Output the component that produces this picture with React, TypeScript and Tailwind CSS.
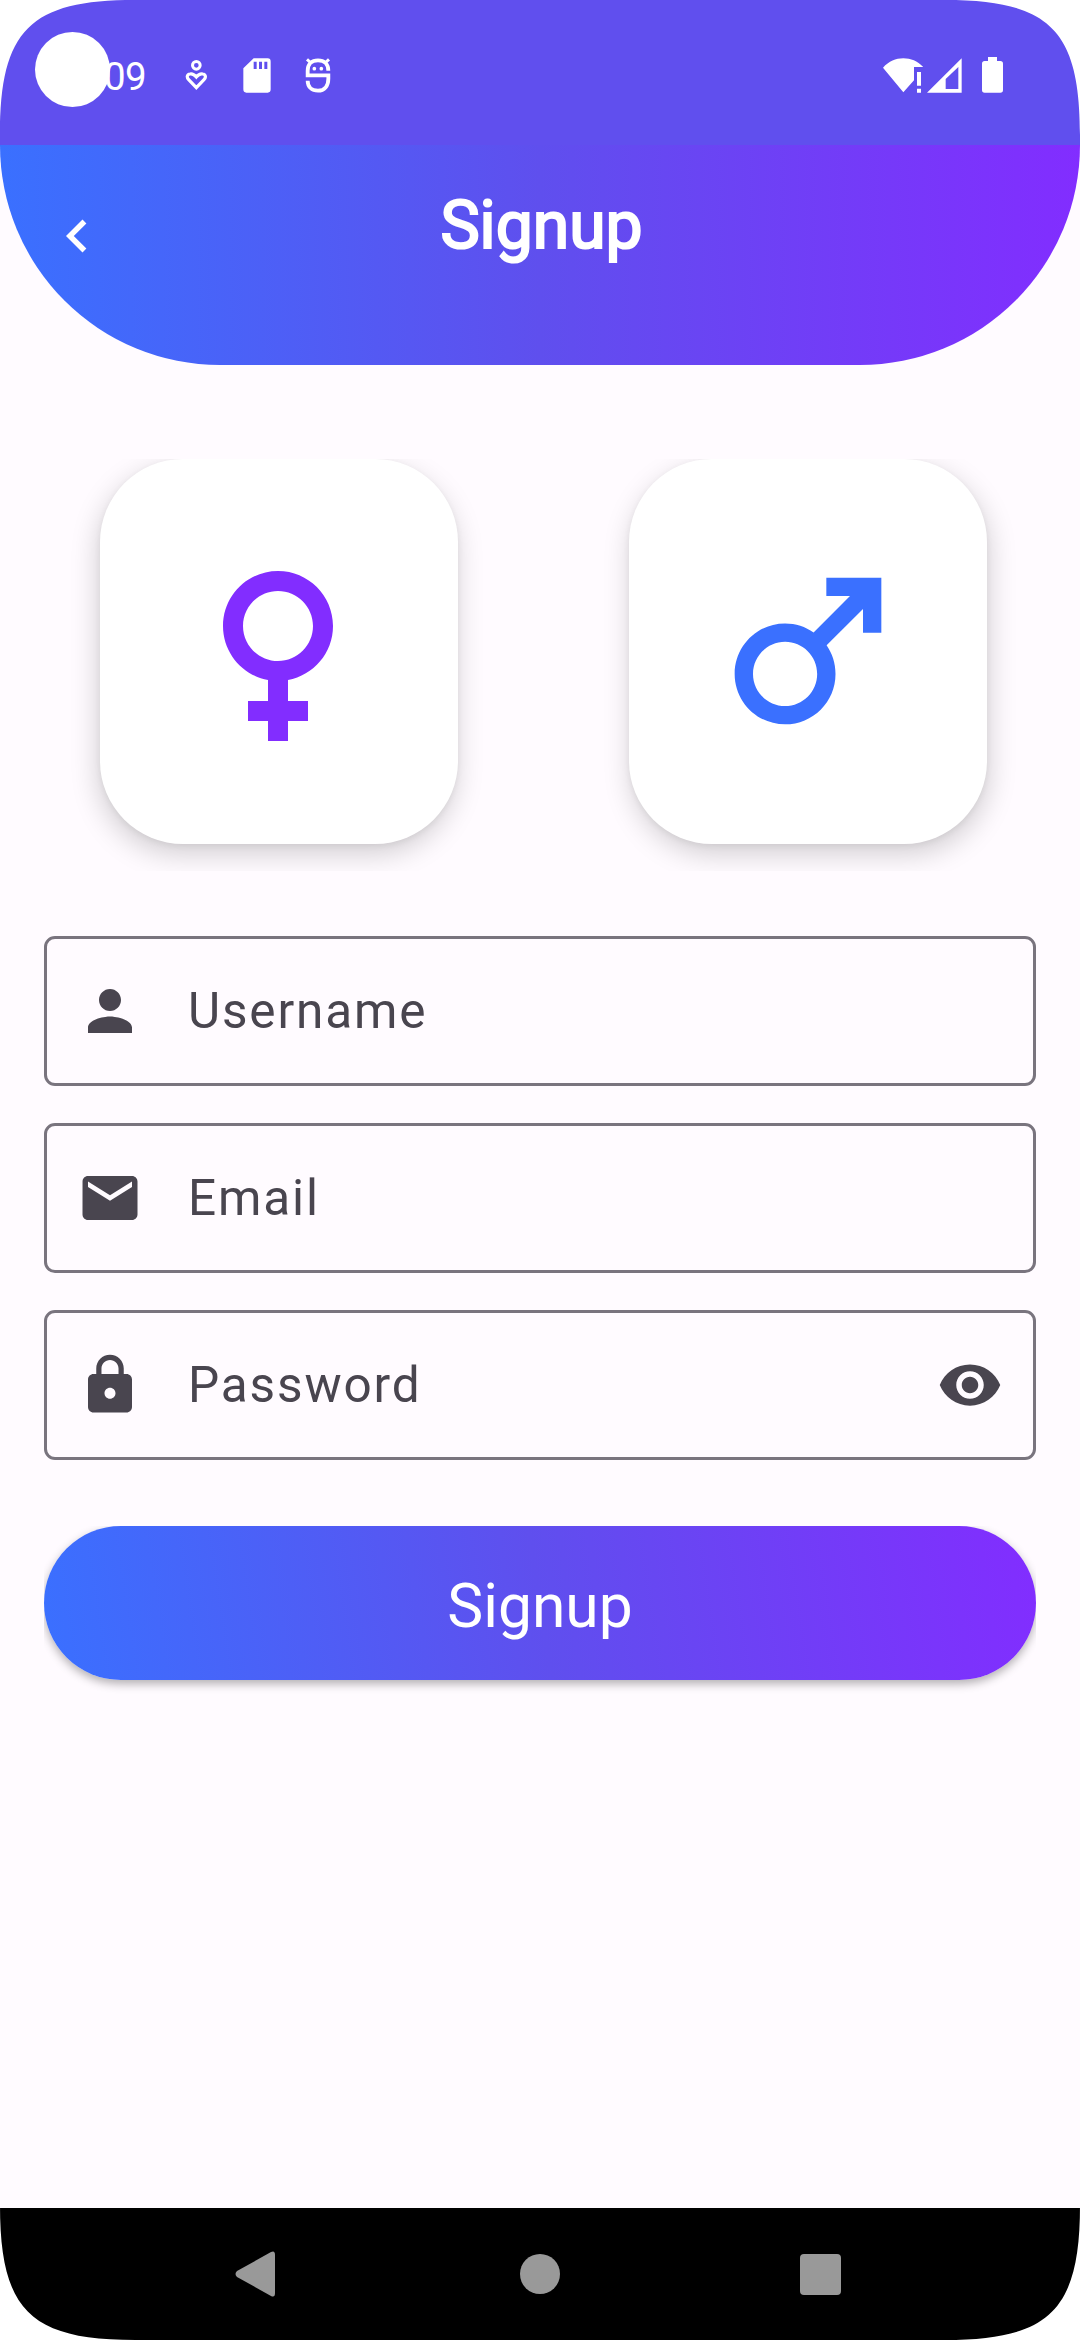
import type { ReactNode } from "react";
import {
  MdChevronLeft,
  MdEmail,
  MdFemale,
  MdLock,
  MdMale,
  MdPerson,
  MdVisibility,
} from "react-icons/md";

function ScreenCorner({ className }: { className: string }) {
  return (
    <svg viewBox="0 0 135 135" className={`pointer-events-none absolute z-20 size-[135px] ${className}`}>
      <path d="M0 0V135C0 30 30 0 135 0Z" fill="#fff" />
    </svg>
  );
}

function StatusBar() {
  return (
    <div className="relative flex h-[145px] items-start bg-[#604fee] text-white">
      <div className="absolute left-[35px] top-[32px] z-10 size-[75px] rounded-full bg-white" />
      <div className="ml-[104px] mt-[52px] w-[44px] text-[38.5px] leading-[50px] tracking-[-0.6px]">09</div>

      <svg viewBox="0 0 66 93" className="ml-[37px] mt-[60px] h-[31px] w-[22px]" fill="none" stroke="#fff">
        <circle cx="34" cy="16" r="11.5" strokeWidth="9" />
        <path
          d="M34 83L11 59C4 52 6 43 15 42C24 40 29 45 34 51C39 45 44 40 53 42C62 43 64 52 57 59Z"
          strokeWidth="9.5"
        />
      </svg>

      <svg viewBox="0 0 84 105" className="ml-[36px] mt-[58px] h-[35px] w-[28px]" fill="#fff">
        <path
          fillRule="evenodd"
          d="M32 1H74Q83 1 83 11V94Q83 104 74 104H10Q1 104 1 94V31ZM32 11V33H41V11ZM48 11V33H57V11ZM64 11V33H73V11Z"
        />
      </svg>

      <svg viewBox="0 0 78 105" className="ml-[34px] mt-[58px] h-[35px] w-[26px]" fill="none" stroke="#fff">
        <path d="M70 38C70 18 58 7 39 7C20 7 8 18 8 38V52H70V62C70 84 58 98 39 98C20 98 8 86 8 68" strokeWidth="11.5" />
        <path d="M6 4L18 15M72 4L60 15" strokeWidth="9" />
        <circle cx="28" cy="32" r="5.5" fill="#fff" stroke="none" />
        <circle cx="49" cy="32" r="5.5" fill="#fff" stroke="none" />
      </svg>

      <svg viewBox="0 0 120 105" className="ml-auto mt-[58px] h-[35px] w-[40px]" fill="#fff">
        <path d="M0 29C18 10 38 1 61 1C84 1 104 10 121 27H93V67L61 103Z" />
        <path d="M102 42H114V83H102ZM102 92H114V104H102Z" />
      </svg>
      <svg viewBox="0 0 105 105" className="ml-[4px] mt-[58px] h-[35px] w-[35px]" fill="#fff">
        <path fillRule="evenodd" d="M104 1V104H0ZM94 27L56 63V93H94Z" />
      </svg>
      <svg viewBox="0 0 63 108" className="mr-[77px] ml-[20px] mt-[57px] h-[36px] w-[21px]" fill="#fff">
        <path d="M18 0H45V12H55Q63 12 63 20V99Q63 107 55 107H8Q0 107 0 99V20Q0 12 8 12H18Z" />
      </svg>
    </div>
  );
}

function Header() {
  return (
    <header className="relative flex h-[220px] items-start justify-center rounded-b-[220px] bg-[linear-gradient(90deg,#3a70ff_0%,#5f4fee_50%,#822dff_100%)] text-white">
      <button className="absolute left-[44px] top-[58px]" aria-label="Back">
        <MdChevronLeft className="size-[66px]" />
      </button>
      <h1 className="ml-[3px] mt-[42px] text-[66px] leading-[78px] [-webkit-text-stroke:2.2px_white]">Signup</h1>
    </header>
  );
}

function GenderCard({ children, shadow }: { children: ReactNode; shadow: string }) {
  return (
    <button className={`flex h-[385px] w-[358px] items-center justify-center rounded-[83px] bg-white pb-[2px] ${shadow}`}>
      {children}
    </button>
  );
}

function Field({ icon, label, trailing }: { icon: ReactNode; label: string; trailing?: ReactNode }) {
  return (
    <label className="flex h-[150px] items-center rounded-[11px] border-[3px] border-[#79747e] pl-[30px] pr-[30px] text-[#49454f]">
      {icon}
      <span className="ml-[45px] flex-1 text-[49.5px] leading-[60px] tracking-[1.85px]">{label}</span>
      {trailing}
    </label>
  );
}

function NavigationBar() {
  return (
    <nav className="flex h-[132px] items-center bg-black pl-[235px]">
      <svg viewBox="0 0 40 46" className="h-[46px] w-[40px]" fill="#999">
        <path d="M2 20L36 1Q40 -1 40 4V42Q40 47 36 45L2 26Q-1 23 2 20Z" />
      </svg>
      <div className="ml-[245px] size-[40px] rounded-full bg-[#999]" />
      <div className="ml-[240px] size-[41px] rounded-[4px] bg-[#999]" />
    </nav>
  );
}

export default function App() {
  return (
    <div className="relative flex h-[2340px] w-[1080px] flex-col overflow-hidden bg-[#fffbff] font-['Roboto',sans-serif]">
      <StatusBar />
      <Header />

      <main className="flex flex-1 flex-col">
        <section className="mt-[94px] flex h-[412px] items-start justify-between overflow-hidden pl-[100px] pr-[93px]">
          <GenderCard shadow="shadow-[-2px_10px_28px_rgba(0,0,0,0.18),0_2px_6px_rgba(0,0,0,0.06)]">
            <MdFemale className="-ml-[2px] size-[240px] text-[#822dff]" />
          </GenderCard>
          <GenderCard shadow="shadow-[2px_10px_28px_rgba(0,0,0,0.18),0_2px_6px_rgba(0,0,0,0.06)]">
            <MdMale className="-ml-[1px] size-[220px] text-[#3a70ff]" />
          </GenderCard>
        </section>

        <form className="mx-[44px] mt-[65px] flex flex-col gap-[37px]">
          <Field icon={<MdPerson className="size-[66px]" />} label="Username" />
          <Field icon={<MdEmail className="size-[66px]" />} label="Email" />
          <Field
            icon={<MdLock className="size-[66px]" />}
            label="Password"
            trailing={<MdVisibility className="size-[66px]" />}
          />
        </form>

        <div className="mx-[44px] mt-[66px] h-[180px] overflow-hidden">
          <button
            type="button"
            className="flex h-[154px] w-full items-center justify-center rounded-[77px] bg-[linear-gradient(81.2deg,#3a70ff_0%,#5f4fee_50%,#822dff_100%)] pt-[8px] text-[60.5px] leading-[72px] text-white shadow-[0_4px_10px_rgba(0,0,0,0.3)]"
          >
            Signup
          </button>
        </div>
      </main>

      <NavigationBar />

      <ScreenCorner className="left-0 top-0" />
      <ScreenCorner className="right-0 top-0 rotate-90" />
      <ScreenCorner className="bottom-0 right-0 rotate-180" />
      <ScreenCorner className="bottom-0 left-0 -rotate-90" />
    </div>
  );
}
